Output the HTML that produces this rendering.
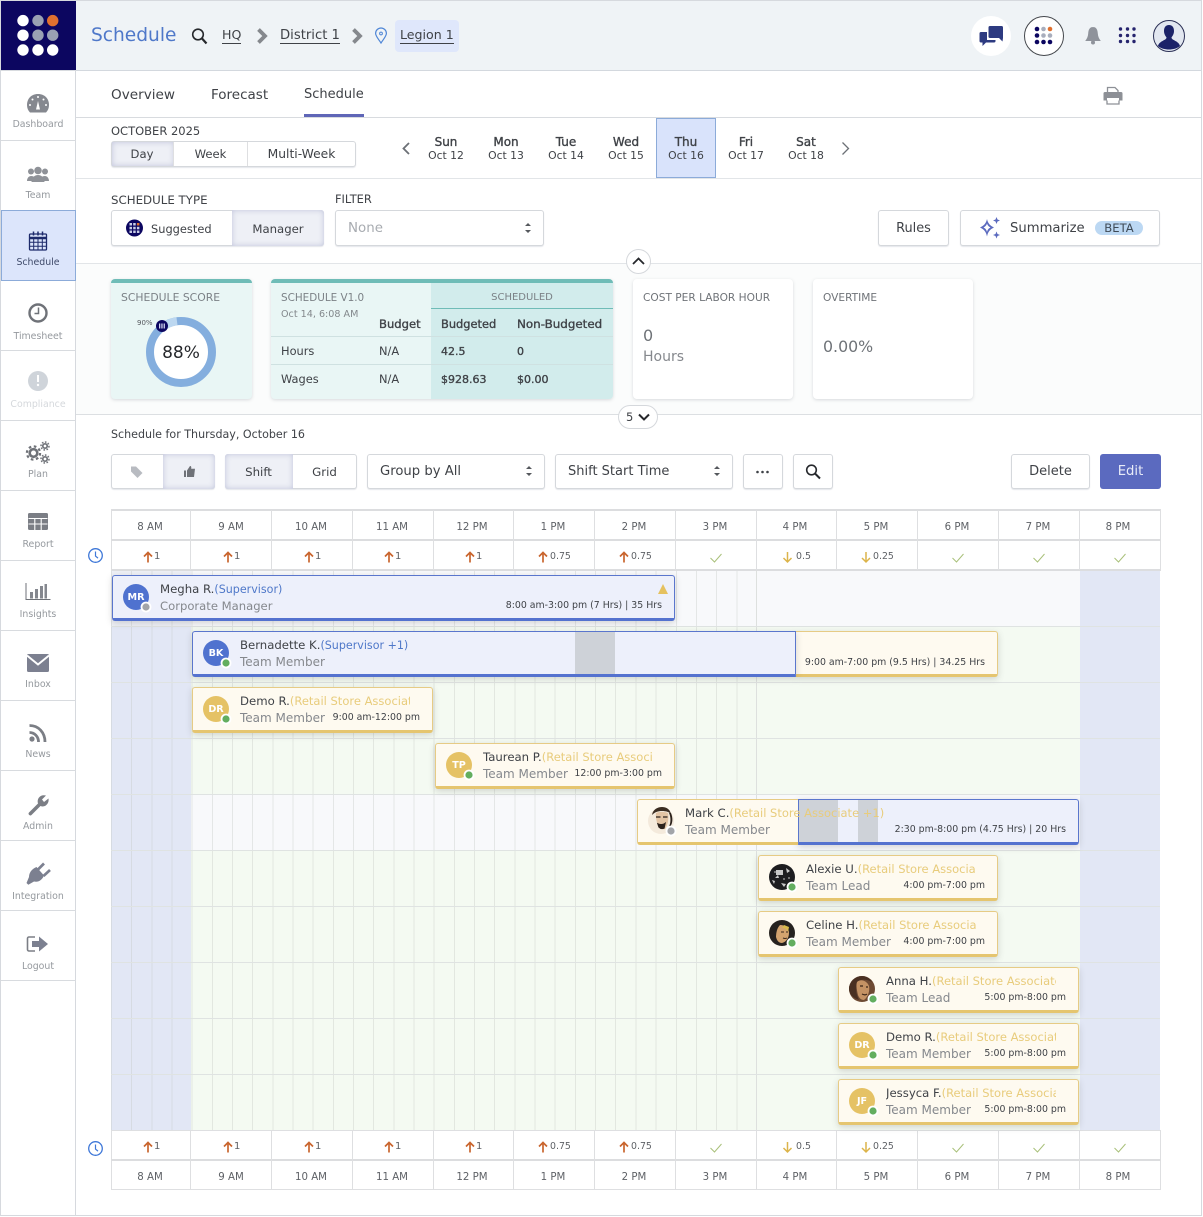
<!DOCTYPE html>
<html><head><meta charset="utf-8"><title>Schedule</title>
<style>
html,body{margin:0;padding:0;background:#fff}
#p{position:relative;width:1203px;height:1217px;overflow:hidden;background:#fff;font-family:"DejaVu Sans","Liberation Sans",sans-serif;color:#3f4247}
#p div{position:absolute;box-sizing:border-box}
.t{white-space:nowrap;line-height:16px;height:16px}
.m{text-align:center}
.s{-webkit-text-stroke:.35px currentColor}
.sl{left:0;width:76px;text-align:center;font-size:9.4px;color:#95999e;line-height:14px;height:14px;white-space:nowrap}
.h{height:1px;background:#d8dbdf}
.v{width:1px;background:#dedfe1}
.b{border:1px solid #d5d8dc;border-radius:3px;background:#fff;box-shadow:0 1px 1px rgba(120,130,150,.2)}
.on{background:#eef0f6;box-shadow:inset 0 0 6px rgba(110,115,170,.35)}
.hr{font-size:10.2px;color:#5e6166;width:70px;text-align:center}
.nm{font-size:10px;color:#5e6166}
.k{box-shadow:0 1px 3px rgba(110,120,130,.25);border-radius:4px}
.c{height:46px;border-radius:3px;box-shadow:0 2px 7px rgba(90,90,90,.24)}
.y{background:#fefaf0;border:1px solid #e6cb85;border-bottom:3px solid #e5c56f}
.bl{background:#edf0fb;border:1px solid #5a76cd;border-bottom:3px solid #5472cf}
.na{left:47px;top:5px;width:170px;overflow:hidden;font-size:11.5px;white-space:nowrap;line-height:16px;height:16px;color:#e8cc7c}
.na b{font-weight:normal;color:#3f4247;font-size:11.7px}
.bl .na{color:#4f78c9;width:400px;font-size:11.1px}
.ro{left:47px;top:22px;font-size:12px;color:#85888d;white-space:nowrap;line-height:16px;height:16px}
.ti{right:12px;top:22px;font-size:9.4px;color:#3f4247;white-space:nowrap;line-height:16px;height:16px}
.br{background:#ced2d8}
</style></head><body><div id="p">

<!-- frame -->
<div style="left:0;top:0;width:1202px;height:1216px;border:1px solid #d6d9de;border-top-color:#d6d9de"></div>

<!-- header -->
<div style="left:76px;top:1px;width:1125px;height:70px;background:#eff3f6;border-bottom:1px solid #d3d8de"></div>
<div style="left:1px;top:1px;width:75px;height:69px;background:#0c0660"></div>
<div class="t" style="left:91px;top:24px;height:24px;line-height:24px;font-size:18.6px;color:#4f78c9">Schedule</div>
<div class="t" style="left:222px;top:27px;font-size:12.6px;border-bottom:1px solid #3f4247;height:17px">HQ</div>
<div class="t" style="left:280px;top:27px;font-size:13.2px;line-height:18px;border-bottom:1px solid #3f4247;height:17px">District 1</div>
<div style="left:395px;top:20px;width:64px;height:32px;background:#dfe7fb;border-radius:4px"></div>
<div class="t" style="left:400px;top:27px;font-size:12.6px;border-bottom:1px solid #3f4247;height:17px">Legion 1</div>
<div style="left:971px;top:16px;width:40px;height:40px;border-radius:50%;background:#fff"></div>
<div style="left:1024px;top:16px;width:40px;height:40px;border-radius:50%;background:#fff;border:1px solid #44474c"></div>

<!-- tabs -->
<div class="t" style="left:111px;top:87px;font-size:13.6px">Overview</div>
<div class="t" style="left:211px;top:87px;font-size:13.5px">Forecast</div>
<div class="t" style="left:304px;top:87px;font-size:13px">Schedule</div>
<div class="h" style="left:76px;top:117px;width:1125px"></div>
<div style="left:304px;top:114px;width:60px;height:3px;background:#5f66b7"></div>

<!-- date row -->
<div class="t" style="left:111px;top:123px;font-size:11.5px">OCTOBER 2025</div>
<div class="b" style="left:111px;top:141px;width:245px;height:26px"></div>
<div class="on" style="left:112px;top:142px;width:62px;height:24px"></div>
<div class="v" style="left:173px;top:142px;height:24px"></div>
<div class="v" style="left:247px;top:142px;height:24px"></div>
<div class="t m" style="left:112px;top:146px;width:60px;font-size:11.6px">Day</div>
<div class="t m" style="left:174px;top:146px;width:73px;font-size:11.6px">Week</div>
<div class="t m" style="left:248px;top:146px;width:107px;font-size:12.3px">Multi-Week</div>
<div style="left:656px;top:118px;width:60px;height:60px;background:#d9e3fb;border:1px solid #8cabd9"></div>
<div class="t m s" style="left:416px;top:134px;width:60px;font-size:12px">Sun</div>
<div class="t m" style="left:416px;top:148px;width:60px;font-size:10.8px">Oct 12</div>
<div class="t m s" style="left:476px;top:134px;width:60px;font-size:12px">Mon</div>
<div class="t m" style="left:476px;top:148px;width:60px;font-size:10.8px">Oct 13</div>
<div class="t m s" style="left:536px;top:134px;width:60px;font-size:12px">Tue</div>
<div class="t m" style="left:536px;top:148px;width:60px;font-size:10.8px">Oct 14</div>
<div class="t m s" style="left:596px;top:134px;width:60px;font-size:12px">Wed</div>
<div class="t m" style="left:596px;top:148px;width:60px;font-size:10.8px">Oct 15</div>
<div class="t m s" style="left:656px;top:134px;width:60px;font-size:12px">Thu</div>
<div class="t m" style="left:656px;top:148px;width:60px;font-size:10.8px">Oct 16</div>
<div class="t m s" style="left:716px;top:134px;width:60px;font-size:12px">Fri</div>
<div class="t m" style="left:716px;top:148px;width:60px;font-size:10.8px">Oct 17</div>
<div class="t m s" style="left:776px;top:134px;width:60px;font-size:12px">Sat</div>
<div class="t m" style="left:776px;top:148px;width:60px;font-size:10.8px">Oct 18</div>
<div class="h" style="left:76px;top:178px;width:1125px;background:#e2e5e8"></div>

<!-- filter row -->
<div class="t" style="left:111px;top:192px;font-size:11.8px">SCHEDULE TYPE</div>
<div class="t" style="left:335px;top:191px;font-size:11.4px">FILTER</div>
<div class="b" style="left:111px;top:210px;width:213px;height:36px"></div>
<div class="on" style="left:232px;top:210px;width:92px;height:36px;border-radius:0 3px 3px 0"></div>
<div class="t" style="left:151px;top:221px;font-size:11.4px">Suggested</div>
<div class="t m" style="left:232px;top:221px;width:92px;font-size:11.7px">Manager</div>
<div class="b" style="left:335px;top:210px;width:209px;height:36px"></div>
<div class="t" style="left:348px;top:221px;font-size:13.4px;color:#a8acb1">None</div>
<div class="b" style="left:878px;top:210px;width:71px;height:36px"></div>
<div class="t m" style="left:878px;top:221px;width:71px;font-size:12.9px">Rules</div>
<div class="b" style="left:960px;top:210px;width:200px;height:36px"></div>
<div class="t" style="left:1010px;top:221px;font-size:13.2px">Summarize</div>
<div style="left:1095px;top:221px;width:48px;height:14px;border-radius:7px;background:#bcd8f3"></div>
<div class="t m" style="left:1095px;top:220px;width:48px;font-size:11.6px;color:#3f4a56">BETA</div>

<!-- metric cards band -->
<div style="left:76px;top:263px;width:1125px;height:152px;background:#fbfcfc;border-top:1px solid #e2e5e8;border-bottom:1px solid #dcdfe2"></div>
<div class="k" style="left:111px;top:279px;width:141px;height:120px;background:#e9f6f5;border-top:4px solid #6fbcb7"></div>
<div class="t" style="left:121px;top:290px;font-size:10.8px;color:#7b8186">SCHEDULE SCORE</div>
<div class="k" style="left:271px;top:279px;width:342px;height:120px;background:#e9f6f5;border-top:4px solid #6fbcb7;overflow:hidden"></div>
<div style="left:431px;top:283px;width:182px;height:116px;background:#d2ecec;border-radius:0 0 4px 0"></div>
<div style="left:431px;top:308px;width:182px;height:1px;background:#6fbcb7"></div>
<div class="h" style="left:271px;top:336px;width:342px;background:#cfe1e1"></div>
<div class="h" style="left:271px;top:364px;width:342px;background:#cfe1e1"></div>
<div class="t" style="left:281px;top:290px;font-size:10.4px;color:#7b8186">SCHEDULE V1.0</div>
<div class="t" style="left:281px;top:307px;font-size:9.6px;color:#83888c">Oct 14, 6:08 AM</div>
<div class="t m" style="left:431px;top:290px;width:182px;font-size:10px;color:#7b8186">SCHEDULED</div>
<div class="t s" style="left:379px;top:316px;font-size:11.6px">Budget</div>
<div class="t s" style="left:441px;top:316px;font-size:11.4px">Budgeted</div>
<div class="t s" style="left:517px;top:316px;font-size:11.9px">Non-Budgeted</div>
<div class="t" style="left:281px;top:343px;font-size:11.4px">Hours</div>
<div class="t" style="left:379px;top:343px;font-size:11.4px">N/A</div>
<div class="t s" style="left:441px;top:344px;font-size:11px">42.5</div>
<div class="t s" style="left:517px;top:344px;font-size:11px">0</div>
<div class="t" style="left:281px;top:371px;font-size:11.4px">Wages</div>
<div class="t" style="left:379px;top:371px;font-size:11.4px">N/A</div>
<div class="t s" style="left:441px;top:372px;font-size:11px">$928.63</div>
<div class="t s" style="left:517px;top:372px;font-size:11px">$0.00</div>
<div class="k" style="left:633px;top:279px;width:160px;height:120px;background:#fff"></div>
<div class="t" style="left:643px;top:290px;font-size:10.6px;color:#6f7378">COST PER LABOR HOUR</div>
<div class="t" style="left:643px;top:328px;font-size:16px;color:#6f7378">0</div>
<div class="t" style="left:643px;top:349px;font-size:14px;color:#85888d">Hours</div>
<div class="k" style="left:813px;top:279px;width:160px;height:120px;background:#fff"></div>
<div class="t" style="left:823px;top:290px;font-size:10.6px;color:#6f7378">OVERTIME</div>
<div class="t" style="left:823px;top:339px;font-size:15.8px;color:#6f7378">0.00%</div>
<div style="left:626px;top:249px;width:25px;height:25px;border-radius:50%;background:#fff;border:1px solid #d5d8dc"></div>
<div style="left:618px;top:405px;width:40px;height:24px;border-radius:12px;background:#fff;border:1px solid #d5d8dc"></div>
<div class="t" style="left:626px;top:409px;font-size:11.5px">5</div>

<!-- toolbar -->
<div class="t" style="left:111px;top:427px;font-size:11.1px">Schedule for Thursday, October 16</div>
<div class="b" style="left:111px;top:454px;width:104px;height:35px"></div>
<div class="on" style="left:163px;top:454px;width:52px;height:35px;border-radius:0 3px 3px 0"></div>
<div class="b" style="left:225px;top:454px;width:132px;height:35px"></div>
<div class="on" style="left:225px;top:454px;width:68px;height:35px;border-radius:3px 0 0 3px"></div>
<div class="t m" style="left:225px;top:464px;width:67px;font-size:11.8px">Shift</div>
<div class="t m" style="left:293px;top:464px;width:63px;font-size:11.8px">Grid</div>
<div class="b" style="left:367px;top:454px;width:178px;height:35px"></div>
<div class="t" style="left:380px;top:463.500px;font-size:13.2px">Group by All</div>
<div class="b" style="left:555px;top:454px;width:178px;height:35px"></div>
<div class="t" style="left:568px;top:463.500px;font-size:13px">Shift Start Time</div>
<div class="b" style="left:743px;top:454px;width:40px;height:35px"></div>
<div class="b" style="left:793px;top:454px;width:40px;height:35px"></div>
<div class="b" style="left:1011px;top:454px;width:79px;height:35px"></div>
<div class="t m" style="left:1011px;top:464px;width:79px;font-size:13px">Delete</div>
<div style="left:1100px;top:454px;width:61px;height:35px;background:#5b6abf;border-radius:3px"></div>
<div class="t m" style="left:1100px;top:464px;width:61px;font-size:13.2px;color:#e8ebf8">Edit</div>

<!-- grid body -->
<div style="left:111px;top:570px;width:1049px;height:560px;background:#f4faf2"></div>
<div style="left:111px;top:570px;width:645px;height:56px;background:#f8f9fb"></div>
<div style="left:756px;top:570px;width:324px;height:56px;background:#f8f9fb"></div>
<div style="left:190px;top:794px;width:890px;height:56px;background:#f8f9fb"></div>
<div style="left:111px;top:626px;width:80px;height:504px;background:#e2e7f5"></div>
<div style="left:111px;top:570px;width:80px;height:56px;background:#eef0f6"></div>
<div style="left:1080px;top:570px;width:80px;height:560px;background:#e2e7f5"></div>
<div style="left:111px;top:570px;width:646px;height:560px;background-image:repeating-linear-gradient(90deg,rgba(190,195,190,.34) 0,rgba(190,195,190,.34) 1px,transparent 1px,transparent 20.17px)"></div>
<div class="v" style="left:756px;top:570px;height:560px;background:#dde0de"></div>
<div class="h" style="left:111px;top:626px;width:1049px;background:#dfe3e2"></div>
<div class="h" style="left:111px;top:682px;width:1049px;background:#dfe3e2"></div>
<div class="h" style="left:111px;top:738px;width:1049px;background:#dfe3e2"></div>
<div class="h" style="left:111px;top:794px;width:1049px;background:#dfe3e2"></div>
<div class="h" style="left:111px;top:850px;width:1049px;background:#dfe3e2"></div>
<div class="h" style="left:111px;top:906px;width:1049px;background:#dfe3e2"></div>
<div class="h" style="left:111px;top:962px;width:1049px;background:#dfe3e2"></div>
<div class="h" style="left:111px;top:1018px;width:1049px;background:#dfe3e2"></div>
<div class="h" style="left:111px;top:1074px;width:1049px;background:#dfe3e2"></div>

<!-- table head/foot -->
<div style="left:111px;top:509px;width:1050px;height:62px;background:#fff;border:1px solid #dedfe1;border-top:2px solid #dcdddf;border-bottom:2px solid #dcdddf"></div>
<div style="left:111px;top:539px;width:1050px;height:2px;background:#dcdddf"></div>
<div style="left:111px;top:1130px;width:1050px;height:60px;background:#fff;border:1px solid #dedfe1"></div>
<div style="left:111px;top:1159px;width:1050px;height:2px;background:#dcdddf"></div>

<div class="v" style="left:190px;top:510px;height:60px"></div><div class="v" style="left:271px;top:510px;height:60px"></div><div class="v" style="left:352px;top:510px;height:60px"></div><div class="v" style="left:433px;top:510px;height:60px"></div><div class="v" style="left:513px;top:510px;height:60px"></div><div class="v" style="left:594px;top:510px;height:60px"></div><div class="v" style="left:675px;top:510px;height:60px"></div><div class="v" style="left:756px;top:510px;height:60px"></div><div class="v" style="left:836px;top:510px;height:60px"></div><div class="v" style="left:917px;top:510px;height:60px"></div><div class="v" style="left:998px;top:510px;height:60px"></div><div class="v" style="left:1079px;top:510px;height:60px"></div>
<div class="v" style="left:190px;top:1131px;height:59px"></div><div class="v" style="left:271px;top:1131px;height:59px"></div><div class="v" style="left:352px;top:1131px;height:59px"></div><div class="v" style="left:433px;top:1131px;height:59px"></div><div class="v" style="left:513px;top:1131px;height:59px"></div><div class="v" style="left:594px;top:1131px;height:59px"></div><div class="v" style="left:675px;top:1131px;height:59px"></div><div class="v" style="left:756px;top:1131px;height:59px"></div><div class="v" style="left:836px;top:1131px;height:59px"></div><div class="v" style="left:917px;top:1131px;height:59px"></div><div class="v" style="left:998px;top:1131px;height:59px"></div><div class="v" style="left:1079px;top:1131px;height:59px"></div>

<div class="t hr" style="left:115px;top:520px">8 AM</div><div class="t hr" style="left:196px;top:520px">9 AM</div><div class="t hr" style="left:276px;top:520px">10 AM</div><div class="t hr" style="left:357px;top:520px">11 AM</div><div class="t hr" style="left:437px;top:520px">12 PM</div><div class="t hr" style="left:518px;top:520px">1 PM</div><div class="t hr" style="left:599px;top:520px">2 PM</div><div class="t hr" style="left:680px;top:520px">3 PM</div><div class="t hr" style="left:760px;top:520px">4 PM</div><div class="t hr" style="left:841px;top:520px">5 PM</div><div class="t hr" style="left:922px;top:520px">6 PM</div><div class="t hr" style="left:1003px;top:520px">7 PM</div><div class="t hr" style="left:1083px;top:520px">8 PM</div>
<div class="t hr" style="left:115px;top:1170px">8 AM</div><div class="t hr" style="left:196px;top:1170px">9 AM</div><div class="t hr" style="left:276px;top:1170px">10 AM</div><div class="t hr" style="left:357px;top:1170px">11 AM</div><div class="t hr" style="left:437px;top:1170px">12 PM</div><div class="t hr" style="left:518px;top:1170px">1 PM</div><div class="t hr" style="left:599px;top:1170px">2 PM</div><div class="t hr" style="left:680px;top:1170px">3 PM</div><div class="t hr" style="left:760px;top:1170px">4 PM</div><div class="t hr" style="left:841px;top:1170px">5 PM</div><div class="t hr" style="left:922px;top:1170px">6 PM</div><div class="t hr" style="left:1003px;top:1170px">7 PM</div><div class="t hr" style="left:1083px;top:1170px">8 PM</div>

<div class="t nm" style="left:154px;top:549px">1</div><div class="t nm" style="left:234px;top:549px">1</div><div class="t nm" style="left:315px;top:549px">1</div><div class="t nm" style="left:395px;top:549px">1</div><div class="t nm" style="left:476px;top:549px">1</div><div class="t nm" style="left:550px;top:549px;font-size:9.4px">0.75</div><div class="t nm" style="left:631px;top:549px;font-size:9.4px">0.75</div><div class="t nm" style="left:796px;top:549px;font-size:9.4px">0.5</div><div class="t nm" style="left:873px;top:549px;font-size:9.4px">0.25</div>
<div class="t nm" style="left:154px;top:1139px">1</div><div class="t nm" style="left:234px;top:1139px">1</div><div class="t nm" style="left:315px;top:1139px">1</div><div class="t nm" style="left:395px;top:1139px">1</div><div class="t nm" style="left:476px;top:1139px">1</div><div class="t nm" style="left:550px;top:1139px;font-size:9.4px">0.75</div><div class="t nm" style="left:631px;top:1139px;font-size:9.4px">0.75</div><div class="t nm" style="left:796px;top:1139px;font-size:9.4px">0.5</div><div class="t nm" style="left:873px;top:1139px;font-size:9.4px">0.25</div>

<!-- shift cards -->
<div class="c bl" style="left:112px;top:575px;width:563px">
  <div class="na" style="left:47px"><b>Megha R.</b>(Supervisor)</div>
  <div class="ro" style="font-size:11.6px">Corporate Manager</div>
  <div class="ti">8:00 am-3:00 pm (7 Hrs) | 35 Hrs</div>
</div>
<div class="c y" style="left:796px;top:631px;width:202px;border-left:0;border-radius:0 3px 3px 0">
  <div class="ti" style="top:23px">9:00 am-7:00 pm (9.5 Hrs) | 34.25 Hrs</div>
</div>
<div class="c bl" style="left:192px;top:631px;width:604px;border-radius:3px 0 0 3px">
  <div class="br" style="left:382px;top:0;width:40px;height:42px"></div>
  <div class="na"><b>Bernadette K.</b>(Supervisor +1)</div>
  <div class="ro">Team Member</div>
</div>
<div class="c y" style="left:192px;top:687px;width:241px">
  <div class="na"><b>Demo R.</b>(Retail Store Associate)</div>
  <div class="ro">Team Member</div><div class="ti">9:00 am-12:00 pm</div>
</div>
<div class="c y" style="left:435px;top:743px;width:240px">
  <div class="na"><b>Taurean P.</b>(Retail Store Associate)</div>
  <div class="ro">Team Member</div><div class="ti">12:00 pm-3:00 pm</div>
</div>
<div class="c bl" style="left:798px;top:799px;width:281px;border-radius:0 3px 3px 0">
  <div class="br" style="left:0;top:0;width:39px;height:42px"></div>
  <div class="br" style="left:59px;top:0;width:20px;height:42px"></div>
  <div class="ti">2:30 pm-8:00 pm (4.75 Hrs) | 20 Hrs</div>
</div>
<div class="c y" style="left:637px;top:799px;width:161px;border-right:0;border-radius:3px 0 0 3px;box-shadow:none">
  <div class="ro">Team Member</div>
</div>
<div class="na" style="left:685px;top:805px;width:200px"><b>Mark C.</b>(Retail Store Associate +1)</div>
<div class="c y" style="left:758px;top:855px;width:240px">
  <div class="na"><b>Alexie U.</b>(Retail Store Associate)</div>
  <div class="ro">Team Lead</div><div class="ti">4:00 pm-7:00 pm</div>
</div>
<div class="c y" style="left:758px;top:911px;width:240px">
  <div class="na"><b>Celine H.</b>(Retail Store Associate)</div>
  <div class="ro">Team Member</div><div class="ti">4:00 pm-7:00 pm</div>
</div>
<div class="c y" style="left:838px;top:967px;width:241px">
  <div class="na"><b>Anna H.</b>(Retail Store Associate)</div>
  <div class="ro">Team Lead</div><div class="ti">5:00 pm-8:00 pm</div>
</div>
<div class="c y" style="left:838px;top:1023px;width:241px">
  <div class="na"><b>Demo R.</b>(Retail Store Associate)</div>
  <div class="ro">Team Member</div><div class="ti">5:00 pm-8:00 pm</div>
</div>
<div class="c y" style="left:838px;top:1079px;width:241px">
  <div class="na"><b>Jessyca F.</b>(Retail Store Associate)</div>
  <div class="ro">Team Member</div><div class="ti">5:00 pm-8:00 pm</div>
</div>

<!-- sidebar -->
<div style="left:1px;top:70px;width:75px;height:911px;border-right:1px solid #d6d9de;background:#fff"></div>
<div style="left:75px;top:70px;width:1px;height:1146px;background:#d6d9de"></div>
<div class="h" style="left:1px;top:70px;width:75px"></div><div class="h" style="left:1px;top:140px;width:75px"></div><div class="h" style="left:1px;top:350px;width:75px"></div><div class="h" style="left:1px;top:420px;width:75px"></div><div class="h" style="left:1px;top:490px;width:75px"></div><div class="h" style="left:1px;top:560px;width:75px"></div><div class="h" style="left:1px;top:630px;width:75px"></div><div class="h" style="left:1px;top:700px;width:75px"></div><div class="h" style="left:1px;top:770px;width:75px"></div><div class="h" style="left:1px;top:840px;width:75px"></div><div class="h" style="left:1px;top:910px;width:75px"></div><div class="h" style="left:1px;top:980px;width:75px"></div>
<div style="left:1px;top:210px;width:75px;height:71px;background:#dce5fb;border:1px solid #8cabd9"></div>
<div class="sl" style="top:118px">Dashboard</div>
<div class="sl" style="top:189px">Team</div>
<div class="sl" style="top:256px;color:#3f4a6a">Schedule</div>
<div class="sl" style="top:330px">Timesheet</div>
<div class="sl" style="top:398px;color:#d5d8dc">Compliance</div>
<div class="sl" style="top:468px">Plan</div>
<div class="sl" style="top:538px">Report</div>
<div class="sl" style="top:608px">Insights</div>
<div class="sl" style="top:678px">Inbox</div>
<div class="sl" style="top:748px">News</div>
<div class="sl" style="top:820px">Admin</div>
<div class="sl" style="top:890px">Integration</div>
<div class="sl" style="top:960px">Logout</div>

<!-- icon overlay -->
<svg width="1203" height="1217" viewBox="0 0 1203 1217" style="position:absolute;left:0;top:0">
<defs>
<path id="u" d="M0 5.5V-4.5M-4 -.5L0 -4.5L4 -.5" stroke="#c9652e" stroke-width="1.7" fill="none"/>
<path id="d" d="M0 -5.5V4.5M-4 .5L0 4.5L4 .5" stroke="#dcb44a" stroke-width="1.5" fill="none"/>
<path id="ok" d="M-5.5 0L-1.5 4L5.5 -4" stroke="#a9c07a" stroke-width="1" fill="none"/>
<g id="clk" fill="none" stroke="#3f78d8"><circle r="6.8" stroke-width="1.3"/><path d="M0 -4V.6L2.5 2.6" stroke-width="1.2"/></g>
<path id="ud" d="M-3 -2L0 -5L3 -2zM-3 2L0 5L3 2z" fill="#55585d"/>
</defs>

<!-- logo -->
<g fill="#fff"><circle cx="23" cy="20.6" r="5.7"/><circle cx="23" cy="35.2" r="5.7"/><circle cx="23" cy="50" r="5.7"/><circle cx="38" cy="50" r="5.7"/><circle cx="52.7" cy="50" r="5.7"/></g>
<g fill="#9aa1b3"><circle cx="38" cy="20.6" r="5.7"/><circle cx="38" cy="35.2" r="5.7"/><circle cx="52.7" cy="35.2" r="5.7"/></g>
<circle cx="52.7" cy="20.6" r="5.7" fill="#e0702f"/>

<!-- header icons -->
<g fill="none" stroke="#26282c" stroke-width="1.600"><circle cx="198" cy="34.5" r="5.3"/><path d="M202 38.5L206.5 43.5" stroke-width="2.200"/></g>
<path d="M258.500 29.500L265 36L258.500 42.500" fill="none" stroke="#85888d" stroke-width="3.800"/>
<path d="M353.500 29.500L360 36L353.500 42.500" fill="none" stroke="#85888d" stroke-width="3.800"/>
<path d="M381 43C378 38.5 375.6 36 375.6 33.4a5.4 5.4 0 0 1 10.8 0C386.4 36 384 38.5 381 43z" fill="none" stroke="#4f86d6" stroke-width="1.2"/><circle cx="381" cy="33.5" r="1.4" fill="none" stroke="#4f86d6"/>

<path d="M990 26h11.500a1.500 1.500 0 0 1 1.500 1.500V38l-.5 3.500-3.500-3.500H990a1.500 1.500 0 0 1-1.500-1.500v-9A1.500 1.500 0 0 1 990 26z" fill="#2d3a80"/>
<path d="M981 32h6v8h8.500v1a1.500 1.500 0 0 1-1.500 1.500h-8l-3.500 3.500v-3.500H981a1.500 1.500 0 0 1-1.500-1.500v-7.500A1.500 1.500 0 0 1 981 32z" fill="#2d3a80"/>
<g fill="#0c0660"><circle cx="1037" cy="29" r="2.300"/><circle cx="1037" cy="35.500" r="2.300"/><circle cx="1037" cy="42" r="2.300"/><circle cx="1043.500" cy="42" r="2.300"/><circle cx="1050" cy="42" r="2.300"/></g>
<g fill="#a8adbc"><circle cx="1043.500" cy="29" r="2.300"/><circle cx="1043.500" cy="35.500" r="2.300"/><circle cx="1050" cy="35.500" r="2.300"/></g><circle cx="1050" cy="29" r="2.300" fill="#e0702f"/>
<path d="M1093 27c-3.500 0-4.600 3-4.800 6.500-.2 3-1.200 5-3 7.500h15.600c-1.800-2.500-2.800-4.500-3-7.500-.2-3.500-1.300-6.500-4.800-6.500z" fill="#8f939b"/><circle cx="1093" cy="42.500" r="2" fill="#8f939b"/>
<g fill="#26246e"><circle cx="1120.500" cy="29" r="1.700"/><circle cx="1127.500" cy="29" r="1.700"/><circle cx="1134" cy="29" r="1.700"/><circle cx="1120.500" cy="35.500" r="1.700"/><circle cx="1127.500" cy="35.500" r="1.700"/><circle cx="1134" cy="35.500" r="1.700"/><circle cx="1120.500" cy="41.500" r="1.700"/><circle cx="1127.500" cy="41.500" r="1.700"/><circle cx="1134" cy="41.500" r="1.700"/></g>
<circle cx="1169" cy="36" r="15.500" fill="#e2e7f0" stroke="#2a2f55" stroke-width="1"/>
<path d="M1169 25c-3.500 0-5 2.500-5 6 0 3 1.500 5 2.500 6.500 0 3-7 3-8.500 8.500 3 2.500 7 3.500 11 3.500s8-1 11-3.500c-1.500-5.500-8.500-5.500-8.500-8.500 1-1.500 2.500-3.500 2.500-6.500 0-3.500-1.500-6-5-6z" fill="#1b2268"/>

<!-- print -->
<g fill="none" stroke="#8d9096" stroke-width="1.300"><path d="M1107.500 92V87.500h7.500l3 3V92"/><path d="M1107 100.500v3.500h12v-3.500"/></g>
<path d="M1105 92h16a1.500 1.500 0 0 1 1.500 1.500v7H1119v-2.500h-12v2.500h-3.500v-7A1.500 1.500 0 0 1 1105 92z" fill="#8d9096"/>

<!-- chevrons -->
<path d="M409 143L403.500 148.500L409 154" fill="none" stroke="#6c7076" stroke-width="1.800"/>
<path d="M842.500 142.500L848.500 148.500L842.500 154.500" fill="none" stroke="#6c7076" stroke-width="1.300"/>
<path d="M633 264L638.500 258.500L644 264" fill="none" stroke="#26282c" stroke-width="1.800"/>
<path d="M639 414.500L644 419.500L649 414.500" fill="none" stroke="#26282c" stroke-width="2"/>

<!-- suggested dot -->
<circle cx="134.500" cy="228" r="8.500" fill="#0c0660"/>
<g fill="#c9cde6"><rect x="129.500" y="223" width="2.500" height="2.500"/><rect x="133.200" y="223" width="2.500" height="2.500"/><rect x="136.900" y="223" width="2.500" height="2.500" fill="#e0702f"/><rect x="129.500" y="226.800" width="2.500" height="2.500"/><rect x="133.200" y="226.800" width="2.500" height="2.500"/><rect x="136.900" y="226.800" width="2.500" height="2.500"/><rect x="129.500" y="230.500" width="2.500" height="2.500"/><rect x="133.200" y="230.500" width="2.500" height="2.500"/><rect x="136.900" y="230.500" width="2.500" height="2.500"/></g>

<!-- select arrows -->
<use href="#ud" x="528" y="228"/><use href="#ud" x="529" y="471"/><use href="#ud" x="717" y="471"/>

<!-- sparkles -->
<g fill="#5b6abf"><path d="M987 219c1 4.500 3 6.500 7 8.500-4 2-6 4-7 9-1-5-3-7-7-9 4-2 6-4 7-8.500zM987 223.500c-.6 2-1.700 3.100-3.500 4 1.800.9 2.900 2 3.500 4.500.6-2.500 1.700-3.600 3.500-4.500-1.800-.9-2.900-2-3.500-4z" fill-rule="evenodd"/><path d="M996.500 217l1 2.500 2.500 1-2.500 1-1 2.500-1-2.500-2.500-1 2.500-1z"/><path d="M996.500 231.500l1 2.500 2.500 1-2.500 1-1 2.500-1-2.500-2.500-1 2.500-1z"/></g>

<!-- score donut -->
<circle cx="181" cy="352" r="31" fill="#fff" stroke="#84aede" stroke-width="8"/>
<path d="M163 326.800A31 31 0 0 1 177 321.300" fill="none" stroke="#bcd7f0" stroke-width="8"/>
<circle cx="162" cy="326" r="6" fill="#0c0660"/><g fill="#cfd3ee"><rect x="159" y="323.500" width="1.300" height="5"/><rect x="161.300" y="323.500" width="1.300" height="5"/><rect x="163.600" y="323.500" width="1.300" height="5"/></g>
<text x="137" y="325" font-size="7" fill="#55585d" font-family="DejaVu Sans">90%</text>
<text x="181" y="358" font-size="17" text-anchor="middle" fill="#26282c" font-family="DejaVu Sans">88%</text>

<!-- toolbar icons -->
<path d="M131 466.500h5l6.500 6.500-5 5-6.500-6.500z" fill="#b8bbc1"/>
<path d="M184 470.500h2v6.500h-2zM187 470.500l3-4.500c1.200 0 1.500 1 1.200 2.800h3.800l-1 8.200h-7z" fill="#6f7278"/>
<g fill="#3f4247"><circle cx="757.500" cy="472" r="1.300"/><circle cx="762.500" cy="472" r="1.300"/><circle cx="767.500" cy="472" r="1.300"/></g>
<g fill="none" stroke="#26282c" stroke-width="1.600"><circle cx="811.500" cy="470" r="4.800"/><path d="M815 473.500L820 478.500" stroke-width="2"/></g>

<!-- clocks -->
<use href="#clk" x="95.500" y="555.500"/><use href="#clk" x="95.500" y="1148.500"/>

<!-- variance -->
<use href="#u" x="148" y="557"/><use href="#u" x="228" y="557"/><use href="#u" x="309" y="557"/><use href="#u" x="389" y="557"/><use href="#u" x="470" y="557"/><use href="#u" x="543" y="557"/><use href="#u" x="624" y="557"/>
<use href="#ok" x="716" y="558"/><use href="#d" x="787.500" y="557.500"/><use href="#d" x="866" y="557.500"/><use href="#ok" x="958" y="558"/><use href="#ok" x="1039" y="558"/><use href="#ok" x="1120" y="558"/>
<use href="#u" x="148" y="1147"/><use href="#u" x="228" y="1147"/><use href="#u" x="309" y="1147"/><use href="#u" x="389" y="1147"/><use href="#u" x="470" y="1147"/><use href="#u" x="543" y="1147"/><use href="#u" x="624" y="1147"/>
<use href="#ok" x="716" y="1148"/><use href="#d" x="787.500" y="1147.500"/><use href="#d" x="866" y="1147.500"/><use href="#ok" x="958" y="1148"/><use href="#ok" x="1039" y="1148"/><use href="#ok" x="1120" y="1148"/>

<!-- warning -->
<path d="M663 584L668 594H658z" fill="#e5c15f"/>

<!-- avatars -->
<g font-family="DejaVu Sans" font-size="9.600" font-weight="bold" fill="#fff" text-anchor="middle">
<circle cx="136" cy="597" r="13" fill="#4f72cf"/><text x="136" y="600">MR</text>
<circle cx="216" cy="653" r="13" fill="#4f72cf"/><text x="216" y="656">BK</text>
<circle cx="216" cy="709" r="13" fill="#e5c265"/><text x="216" y="712">DR</text>
<circle cx="459" cy="765" r="13" fill="#e5c265"/><text x="459" y="768">TP</text>
<circle cx="862" cy="1045" r="13" fill="#e5c265"/><text x="862" y="1048">DR</text>
<circle cx="862" cy="1101" r="13" fill="#e5c265"/><text x="862" y="1104">JF</text>
</g>
<!-- mark photo -->
<circle cx="661" cy="821" r="13" fill="#f4eadc"/>
<path d="M652 815c1-6 6-8 10-8s8 2 9 7c-2-2-5-3-9-3s-7 1-10 4z" fill="#3b2d22"/>
<path d="M656 813c3-1.500 9-1.500 12 0 1 5 0 12-3 16-3 1-5-1-7-4-1.500-3-2.500-8-2-12z" fill="#e3c4a4"/>
<path d="M656 817h4.500M663 817h4.500M658 824c2 1 5 1 7-.5l-1 4.500c-2 1-4 0-5-1z" stroke="#2c221c" stroke-width="1.300" fill="#2c221c"/>
<path d="M669 813c2 4 2.500 12-2 16l3-2c3-4 3-9 1-14z" fill="#2c221c"/>
<!-- alexie photo -->
<circle cx="782" cy="877" r="13" fill="#1d1d20"/>
<path d="M776 870h7v5h-7zM786 868l4 3-3 2zM772 880l3 1-1 3zM781 883l5 1-2 3zM778 875l-3 3h4z" fill="#c9c9c9"/>
<g fill="#8c8c8c"><circle cx="789" cy="878" r="1"/><circle cx="775" cy="872" r="1"/><circle cx="784" cy="879" r="1"/></g>
<!-- celine photo -->
<circle cx="782" cy="933" r="13" fill="#26221f"/>
<path d="M780 925c5 0 9 3 9 8 0 5-3 9-7 10-3 0-5-2-6-6 0-4 1-9 4-12z" fill="#d4a46f"/>
<path d="M782 928c3 0 5 1 6 4l1-5-5-2z" fill="#d9bb4d"/>
<path d="M781 932h3M786 932h2M783 938c1.500 .6 3 .6 4 0" stroke="#3a281e" stroke-width="1" fill="none"/>
<!-- anna photo -->
<circle cx="862" cy="989" r="13" fill="#6e4a33"/>
<path d="M857 981c5-2 10 0 12 5 1 5-1 11-5 14-3 0-5-2-6-5-1-4-2-9-1-14z" fill="#c49264"/>
<path d="M849 989c0-7 6-13 13-13 4 0 8 2 10 6-5-3-12-3-15 0-2 4-1 12 2 18-6-2-10-6-10-11z" fill="#4a3022"/>
<path d="M860 986h3M866 987h2M862 994c2 1 4 1 5 0" stroke="#3a2518" stroke-width="1.200" fill="none"/>
<!-- status dots -->
<g stroke="#fff" stroke-width="1.800" fill="#63ae5f">
<circle cx="146" cy="607" r="4.500" fill="#a3a5a9"/><circle cx="226" cy="663" r="4.500"/><circle cx="226" cy="719" r="4.500"/><circle cx="469" cy="775" r="4.500"/><circle cx="671" cy="831" r="4.500" fill="#a3a5a9"/><circle cx="792" cy="887" r="4.500"/><circle cx="792" cy="943" r="4.500"/><circle cx="873" cy="999" r="4.500"/><circle cx="873" cy="1055" r="4.500"/><circle cx="873" cy="1111" r="4.500"/>
</g>

<!-- sidebar icons -->
<path d="M38 94C31 94 27 99 27 105c0 3 1 5.500 3 7.500h16c2-2 3-4.500 3-7.500 0-6-4-11-11-11z" fill="#85888f"/>
<g fill="#fff"><path d="M38 101l-2 8.500h4z"/><circle cx="38" cy="97" r="1"/><circle cx="32.500" cy="99.500" r="1"/><circle cx="43.500" cy="99.500" r="1"/><circle cx="30" cy="105" r="1"/><circle cx="46" cy="105" r="1"/></g>

<g fill="#8f9298"><circle cx="31" cy="171.500" r="3"/><circle cx="45" cy="171.500" r="3"/><path d="M27 181c0-3 2-5 4-5s3 .5 3 1l-1 4zM49 181c0-3-2-5-4-5s-3 .5-3 1l1 4z"/><circle cx="38" cy="170.500" r="3.800"/><path d="M31.500 182c0-4 3-7 6.500-7s6.500 3 6.500 7z"/></g>

<g fill="none" stroke="#1d2a6b"><rect x="29.500" y="234" width="17" height="16" rx="1" stroke-width="1.300"/><path d="M29.500 238h17" stroke-width="2.500"/><path d="M29.500 242.300h17M29.500 246.300h17M33.700 238v12M38 238v12M42.300 238v12" stroke-width="1"/><path d="M33.500 231.500v4M42.500 231.500v4M38 231.500v4" stroke-width="1.500"/></g>

<circle cx="38" cy="313" r="8.500" fill="none" stroke="#6f7278" stroke-width="2.400"/><path d="M38.500 307.500v6h-4" fill="none" stroke="#6f7278" stroke-width="1.500"/>

<circle cx="38" cy="381" r="10" fill="#cfd4da"/><rect x="37" y="375" width="2" height="7" fill="#fff"/><circle cx="38" cy="385" r="1.200" fill="#fff"/>

<g fill="none" stroke="#6f7278"><circle cx="33.500" cy="453" r="3.800" stroke-width="2.600"/><circle cx="33.500" cy="453" r="6.600" stroke-width="2.200" stroke-dasharray="2.600 2.600"/><circle cx="45" cy="446" r="2.200" stroke-width="1.700"/><circle cx="45" cy="446" r="4" stroke-width="1.500" stroke-dasharray="1.600 1.500"/><circle cx="45" cy="459" r="2.200" stroke-width="1.700"/><circle cx="45" cy="459" r="4" stroke-width="1.500" stroke-dasharray="1.600 1.500"/></g>

<rect x="28" y="513" width="20" height="17" rx="1.500" fill="#7b7e85"/>
<path d="M28.500 518.500h19M28.500 524h19M34.800 518.500V530M41.200 518.500V530" stroke="#fff" stroke-width="1.100"/>

<path d="M26 583v16.500h24.500" fill="none" stroke="#6f7278" stroke-width="1"/>
<g fill="#85888f"><rect x="30" y="592" width="3" height="6.500"/><rect x="35" y="589" width="3" height="9.500"/><rect x="40" y="586" width="3" height="12.500"/><rect x="44.500" y="584" width="2.500" height="14.500"/></g>

<rect x="27" y="654" width="22" height="18" rx="1.500" fill="#7c8090"/>
<path d="M27 655.500L38 664.500L49 655.500" fill="none" stroke="#fff" stroke-width="2"/>

<circle cx="32" cy="739" r="2.600" fill="#7b7e85"/>
<path d="M29.500 732.500c5 0 9 4 9 9.500M29.500 725.500c9 0 15.500 7 15.500 16.500" fill="none" stroke="#7b7e85" stroke-width="2.800"/>

<path d="M29 812.500L38 803.500C36.500 798.500 40.500 794 46 795.500L42 799.500L44 802L48.500 798.500C49.500 803.500 45 808 40.500 806L31.500 815C30 816.500 27.500 814 29 812.500z" fill="#7b7e85"/>

<path d="M29 877l-2.500 6 1.800 1.800 5.700-3.300c4 1 8-1 10-6l-7.500-8.500c-5 2-7.500 6-7.500 10z" fill="#7c8090"/>
<path d="M37.500 870L44 863.500M43.500 876L50 870" stroke="#7c8090" stroke-width="2.700" fill="none"/>

<path d="M35 937h-6a1.500 1.500 0 0 0-1.500 1.500v11a1.500 1.500 0 0 0 1.500 1.500h6" fill="none" stroke="#7b7e85" stroke-width="1.600"/>
<path d="M32 941h7v-4.500l9 7.500-9 7.500V947h-7z" fill="#7c8090"/>
</svg>
</div></body></html>
